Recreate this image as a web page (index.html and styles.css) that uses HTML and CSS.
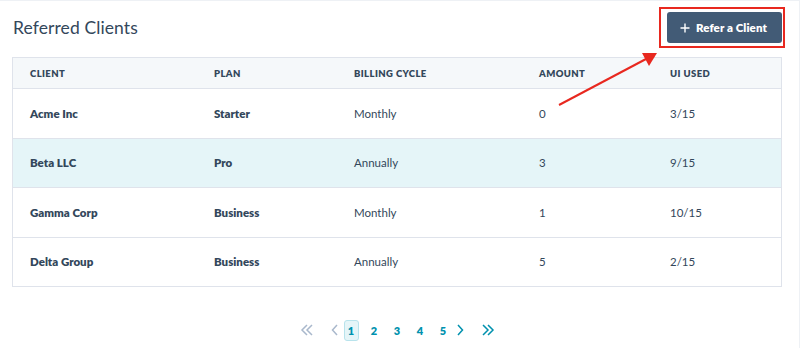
FILE: index.html
```html
<!DOCTYPE html>
<html>
<head>
<meta charset="utf-8">
<link rel="stylesheet" href="styles.css">
</head>
<body>
<div class="page">
  <div class="header">
    <h1 class="title">Referred Clients</h1>
    <button class="btn-refer"><svg class="plus" width="10" height="10" viewBox="0 0 10 10"><path d="M5 0.5 V9.5 M0.5 5 H9.5" stroke="#fff" stroke-width="1.4" fill="none"/></svg>Refer a Client</button>
  </div>
  <div class="table">
    <div class="row head">
      <div class="cell">Client</div>
      <div class="cell">Plan</div>
      <div class="cell">Billing Cycle</div>
      <div class="cell">Amount</div>
      <div class="cell">UI Used</div>
    </div>
    <div class="row">
      <div class="cell strong">Acme Inc</div>
      <div class="cell strong">Starter</div>
      <div class="cell">Monthly</div>
      <div class="cell">0</div>
      <div class="cell">3/15</div>
    </div>
    <div class="row hl">
      <div class="cell strong">Beta LLC</div>
      <div class="cell strong">Pro</div>
      <div class="cell">Annually</div>
      <div class="cell">3</div>
      <div class="cell">9/15</div>
    </div>
    <div class="row">
      <div class="cell strong">Gamma Corp</div>
      <div class="cell strong">Business</div>
      <div class="cell">Monthly</div>
      <div class="cell">1</div>
      <div class="cell">10/15</div>
    </div>
    <div class="row">
      <div class="cell strong">Delta Group</div>
      <div class="cell strong">Business</div>
      <div class="cell">Annually</div>
      <div class="cell">5</div>
      <div class="cell">2/15</div>
    </div>
  </div>
  <div class="pager">
    <span class="pg-icon disabled first"><svg width="14" height="12" viewBox="0 0 14 12"><path d="M7 1 L2 6 L7 11 M12 1 L7 6 L12 11" fill="none" stroke="currentColor" stroke-width="1.5"/></svg></span>
    <span class="pg-icon disabled prev"><svg width="8" height="12" viewBox="0 0 8 12"><path d="M6 1 L1.5 6 L6 11" fill="none" stroke="currentColor" stroke-width="1.5"/></svg></span>
    <span class="pg-num active">1</span>
    <span class="pg-num">2</span>
    <span class="pg-num">3</span>
    <span class="pg-num">4</span>
    <span class="pg-num">5</span>
    <span class="pg-icon next"><svg width="8" height="12" viewBox="0 0 8 12"><path d="M2 1 L6.5 6 L2 11" fill="none" stroke="currentColor" stroke-width="1.5"/></svg></span>
    <span class="pg-icon last"><svg width="14" height="12" viewBox="0 0 14 12"><path d="M2 1 L7 6 L2 11 M7 1 L12 6 L7 11" fill="none" stroke="currentColor" stroke-width="1.5"/></svg></span>
  </div>
  <div class="annot-box"></div>
  <svg class="annot-arrow" width="120" height="70" viewBox="0 0 120 70">
    <line x1="5" y1="62" x2="92" y2="16" stroke="#e8281f" stroke-width="2"/>
    <polygon points="103,10 88,10 95,23" fill="#e8281f"/>
  </svg>
</div>
</body>
</html>
```

FILE: styles.css
```css
* { box-sizing: border-box; }
html, body { margin: 0; padding: 0; background: #fff; }
body {
  font-family: "Lato", "Noto Sans", sans-serif;
  color: #33475b;
  width: 800px;
  height: 348px;
  overflow: hidden;
}
.page {
  position: relative;
  height: 348px;
  border-top: 1px solid #eef1f5;
  border-right: 1px solid #eef1f5;
  padding: 11px 15px 0 12px;
}
.header {
  display: flex;
  justify-content: space-between;
  align-items: center;
  height: 31px;
  margin-bottom: 14px;
}
.title {
  margin: 0 0 0 1px;
  font-size: 17.5px;
  font-weight: 400;
  color: #33475b;
  letter-spacing: 0.1px;
}
.btn-refer {
  width: 115px;
  height: 31px;
  margin-right: 2px;
  border: none;
  border-radius: 3px;
  background: #425b76;
  color: #fff;
  font-family: inherit;
  font-size: 11.5px;
  font-weight: 800;
  display: flex;
  align-items: center;
  justify-content: center;
  gap: 6px;
  padding: 0 2px 0 0;
  letter-spacing: 0.1px;
}
.plus { display: block; flex: none; }
.table {
  border: 1px solid #dfe3eb;
  width: 770px;
}
.row {
  display: grid;
  grid-template-columns: 184px 140px 185px 131px 1fr;
  height: 49.5px;
  align-items: center;
  border-top: 1px solid #dfe3eb;
  font-size: 11.5px;
}
.row.head {
  border-top: none;
  height: 30px;
  background: #f5f8fa;
  text-transform: uppercase;
  font-size: 9.5px;
  font-weight: 800;
  letter-spacing: 0.4px;
}
.row.hl { background: #e5f5f8; }
.cell { padding-left: 17px; white-space: nowrap; }
.strong { font-weight: 800; }
.pager {
  margin-top: 32px;
  display: flex;
  justify-content: center;
  align-items: center;
  height: 22px;
  margin-left: -2px;
}
.pg-icon { color: #0091ae; display: flex; align-items: center; }
.pg-icon.disabled { color: #a9b8cc; }
.pg-icon.first { margin-right: 17px; }
.pg-icon.prev { margin-right: 1px; }
.pg-icon.next { margin-left: 1px; margin-right: 17px; }
.pg-num {
  width: 15px;
  height: 21px;
  margin: 0 4px;
  display: flex;
  align-items: center;
  justify-content: center;
  font-size: 11px;
  font-weight: 800;
  color: #0091ae;
  border: 1px solid transparent;
  border-radius: 3px;
}
.pg-num.active {
  background: #e5f5f8;
  border-color: #b8e3ec;
}
.annot-box {
  position: absolute;
  left: 659px;
  top: 6px;
  width: 126px;
  height: 41px;
  border: 2px solid #e8281f;
}
.annot-arrow {
  position: absolute;
  left: 554px;
  top: 42px;
}
```
